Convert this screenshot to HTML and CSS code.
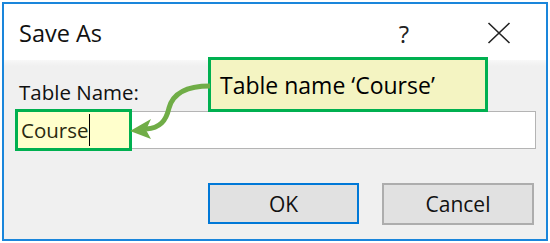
FILE: index.html
```html
<!DOCTYPE html>
<html>
<head>
<meta charset="utf-8">
<link rel="stylesheet" href="styles.css">
</head>
<body>
<div class="window">
  <div class="titlebar">
    <span class="title">Save As</span>
    <span class="help">?</span>
    <span class="close">
      <svg width="24" height="22" viewBox="0 0 24 22"><path d="M1.5 1 L22.5 21 M22.5 1 L1.5 21" stroke="#222" stroke-width="1.6" fill="none"/></svg>
    </span>
  </div>
  <div class="body">
    <div class="label">Table Name:</div>
    <div class="field">
      <div class="highlight"><span class="value">Course</span><span class="caret"></span></div>
    </div>
    <div class="buttons">
      <div class="btn btn-default">OK</div>
      <div class="btn">Cancel</div>
    </div>
  </div>
  <div class="callout">Table name ‘Course’</div>
  <svg class="arrow" width="550" height="243" viewBox="0 0 550 243">
    <path d="M210 86 C186 86 173 93 169 108 C166 121 160 128 146 129" stroke="#70ad47" stroke-width="5" fill="none"/>
    <polygon points="130,131 151,119 146,130 151,139" fill="#70ad47"/>
  </svg>
</div>
</body>
</html>
```
FILE: styles.css
```css
html, body {
  margin: 0;
  padding: 0;
  background: #ffffff;
}
body {
  font-family: "Open Sans", "Noto Sans", sans-serif;
  color: #000;
}
.window {
  position: relative;
  margin: 2px 0 0 2px;
  width: 542px;
  height: 235px;
  border: 2px solid #1a86db;
  background: #f0f0f0;
  display: flex;
  flex-direction: column;
}
.titlebar {
  height: 56px;
  background: #ffffff;
  display: flex;
  align-items: center;
  padding-left: 15px;
  box-sizing: border-box;
}
.title {
  font-size: 23.5px;
  color: #111;
  margin-top: 2px;
}
.help {
  margin-left: auto;
  font-size: 24px;
  color: #222;
  margin-top: 2px;
}
.close {
  margin-left: 78px;
  margin-right: 35px;
  display: flex;
  margin-top: 2px;
}
.body {
  flex: 1;
  background: linear-gradient(#f8f8f8 0px, #f0f0f0 6px);
  padding: 19px 12px 0 11px;
  display: flex;
  flex-direction: column;
}
.label {
  font-size: 20.5px;
  line-height: 26px;
  padding-left: 4px;
  color: #111;
}
.field {
  position: relative;
  margin-top: 6px;
  height: 38px;
  width: 521px;
  box-sizing: border-box;
  border: 1px solid #b4b4b4;
  background: #ffffff;
}
.highlight {
  position: absolute;
  left: -1px;
  top: -3px;
  width: 117px;
  height: 42px;
  box-sizing: border-box;
  border: 3px solid #00b050;
  background: #ffffcc;
  display: flex;
  align-items: center;
  padding-left: 3px;
}
.value {
  font-size: 20.5px;
  color: #2a2a10;
}
.caret {
  display: inline-block;
  width: 1px;
  height: 32px;
  background: #000;
  margin-left: 1px;
}
.buttons {
  display: flex;
  justify-content: flex-end;
  gap: 23px;
  margin-top: 34px;
}
.btn {
  width: 152px;
  height: 42px;
  box-sizing: border-box;
  border: 2px solid #adadad;
  background: #e1e1e1;
  display: flex;
  align-items: center;
  justify-content: center;
  font-size: 21px;
  color: #111;
}
.btn-default {
  width: 151px;
  height: 41px;
  border-color: #0078d7;
}
.callout {
  position: absolute;
  left: 204px;
  top: 53px;
  width: 280px;
  height: 55px;
  box-sizing: border-box;
  border: 3px solid #00b050;
  background: #f4f4c2;
  font-size: 23px;
  display: flex;
  align-items: center;
  padding-left: 9px;
  color: #000;
}
.arrow {
  position: absolute;
  left: -4px;
  top: -4px;
  pointer-events: none;
}
```
